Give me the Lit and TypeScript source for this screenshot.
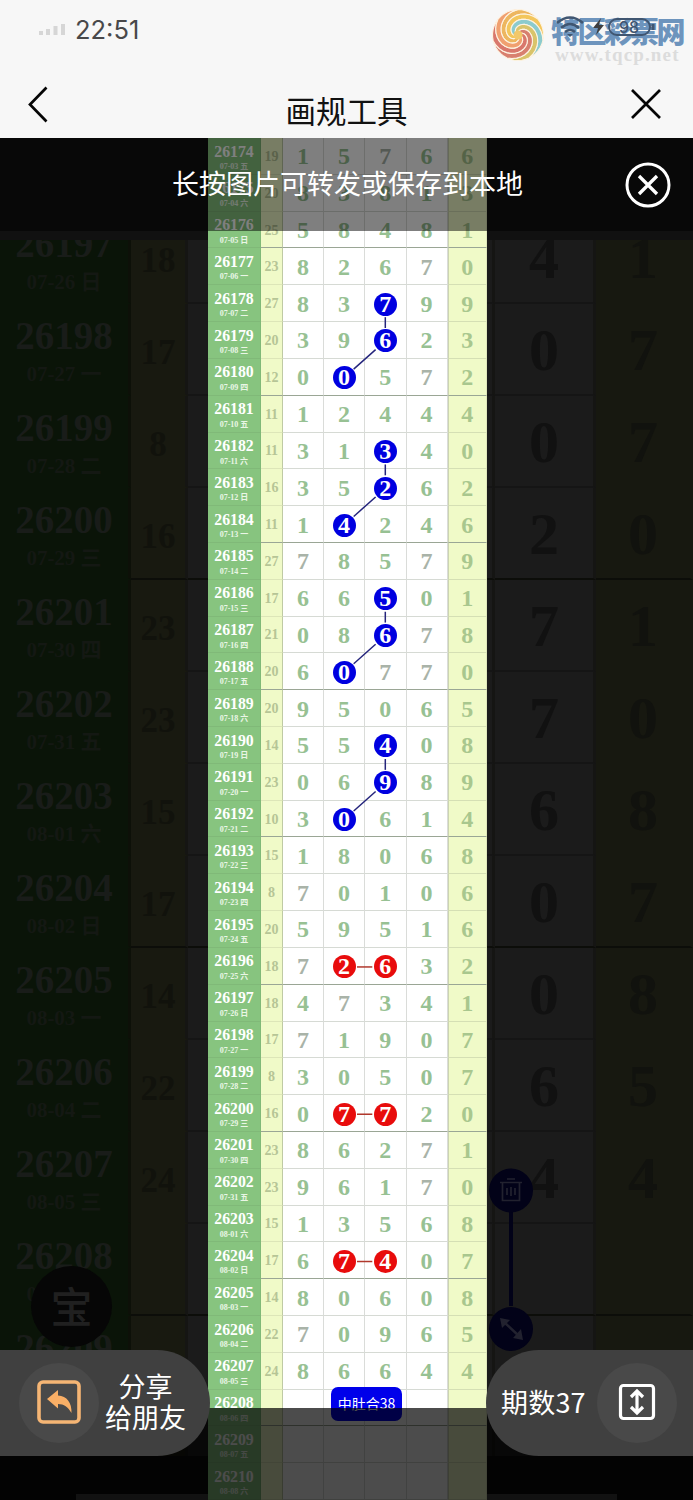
import { LitElement, html, css, svg } from "lit";
import { customElement } from "lit/decorators.js";
import { classMap } from "lit/directives/class-map.js";

const DRAWS = [
  "15766", "83813", "58481", "82670", "83799", "39623", "00572", "12444", "31340", "35262",
  "14246", "78579", "66501", "08678", "60770", "95065", "55408", "06989", "30614", "18068",
  "70106", "59516", "72632", "47341", "71907", "30507", "07720", "86271", "96170", "13568",
  "67407", "80608", "70965", "86644", "", "", "",
];
const FIRST = 26174;
const WEEK = "日一二三四五六";
const ROW = 36.82;

interface Row { issue: number; date: string; sum: string; digits: string[] }

const rows: Row[] = DRAWS.map((d, i) => {
  const day = new Date(Date.UTC(2026, 6, 3 + i));
  const pad = (n: number) => String(n).padStart(2, "0");
  const digits = d ? d.split("") : ["", "", "", "", ""];
  return {
    issue: FIRST + i,
    date: `${pad(day.getUTCMonth() + 1)}-${pad(day.getUTCDate())} ${WEEK[day.getUTCDay()]}`,
    sum: d ? String(digits.slice(0, 4).reduce((a, b) => a + Number(b), 0)) : "",
    digits,
  };
});

const BLUE = [[26178, 2], [26179, 2], [26180, 1], [26182, 2], [26183, 2], [26184, 1], [26186, 2], [26187, 2], [26188, 1], [26190, 2], [26191, 2], [26192, 1]];
const RED = [[26196, 1], [26196, 2], [26200, 1], [26200, 2], [26204, 1], [26204, 2]];
const has = (list: number[][], issue: number, col: number) => list.some(([a, b]) => a === issue && b === col);

// One arm of the swirl logo: the area between two spirals that wind into the centre.
const ARMS = ["#edb65f", "#f3c65c", "#8ccbcd", "#d9c46a", "#d8806f", "#d9786c", "#f0a070"];
const swirlArm = (k: number) => {
  const step = (Math.PI * 2) / ARMS.length;
  const pt = (t: number, a0: number) => {
    const a = a0 - (1 - t) * 3.9;
    const r = 25.5 * Math.pow(t, 0.9);
    return `${(27 + r * Math.cos(a)).toFixed(2)} ${(27 + r * Math.sin(a)).toFixed(2)}`;
  };
  const a = -Math.PI / 2 + k * step;
  const pts: string[] = [];
  for (let i = 0; i <= 20; i++) pts.push(pt(i / 20, a));
  for (let i = 1; i <= 6; i++) pts.push(pt(1, a + (step * i) / 6));
  for (let i = 19; i >= 0; i--) pts.push(pt(i / 20, a + step));
  return "M" + pts.join("L") + "Z";
};

@customElement("trend-chart")
class TrendChart extends LitElement {
  static styles = css`
    :host { display: block; position: relative; width: 279px; background: #fff; font-family: "Liberation Serif", "Noto Sans CJK SC", serif; font-weight: bold; }
    .row { display: grid; grid-template-columns: 53px 22px 41px 41px 41.5px 41px 39.5px; height: 36.82px; box-sizing: border-box; }
    .row > div { border-bottom: 1px solid #d6dad4; border-right: 1px solid #dadcd9; box-sizing: border-box; display: flex; align-items: center; justify-content: center; min-width: 0; padding-top: 2px; }
    .row > .issue { background: #87c47f; color: #fff; flex-direction: column; border-color: #80b978; justify-content: flex-start; padding-top: 5.5px; }
    .no { font-size: 15.8px; line-height: 15px; }
    .date { font-size: 8px; line-height: 9px; margin-top: 3.5px; color: #eaf6e6; }
    .row > .sum { background: #f0fac8; color: #b6c596; font-size: 14px; border-bottom-color: #dde6b8; border-right: 1px solid #bfcaa4; }
    .row > .num { color: #97c193; font-size: 24px; }
    .row > .grey { color: #a9b3a8; }
    .row > .last { background: #f0fac8; color: #a9c78e; border-bottom-color: #d5dfb4; border-left: 1px solid #ccd4b1; border-right-color: #dfe7bb; }
    .thick > div, .thick > .sum, .thick > .last { border-bottom-color: #9aa695; }
    .ball { width: 23px; height: 23px; border-radius: 50%; display: flex; align-items: center; justify-content: center; color: #fff; }
    .blue { background: #0000e0; }
    .red { background: #e80c0c; }
    .links { position: absolute; left: 0; top: 0; width: 279px; height: 1362px; }
    .tag { position: absolute; left: 123px; top: 1249px; width: 71px; height: 34px; border-radius: 7px; background: #0000ea; color: #fff; display: flex; align-items: center; justify-content: center; font: 14px "Noto Sans CJK SC", sans-serif; box-sizing: border-box; padding-bottom: 2px; }
  `;

  private link(issue: number, from: number, nextIssue: number, to: number) {
    const cx = [95, 136, 177.3];
    const cy = (n: number) => (n - FIRST + 0.5) * ROW + 0.5;
    const [x1, y1, x2, y2] = [cx[from], cy(issue), cx[to], cy(nextIssue)];
    const len = Math.hypot(x2 - x1, y2 - y1);
    const ux = ((x2 - x1) / len) * 13, uy = ((y2 - y1) / len) * 13;
    return svg`<line x1=${x1 + ux} y1=${y1 + uy} x2=${x2 - ux} y2=${y2 - uy} stroke=${issue === nextIssue ? "#b0382c" : "#25257c"} stroke-width="1.5"/>`;
  }

  render() {
    return html`
      ${rows.map(r => html`<div class=${classMap({ row: true, thick: r.issue % 4 === 0 })}>
        <div class="issue"><span class="no">${r.issue}</span><span class="date">${r.date}</span></div>
        <div class="sum">${r.sum}</div>
        ${r.digits.map((d, c) => {
          const blue = has(BLUE, r.issue, c), red = has(RED, r.issue, c);
          return html`<div class=${classMap({ num: true, last: c === 4, grey: d === "7" && c < 4 })}>${blue || red
            ? html`<span class=${classMap({ ball: true, blue, red })}>${d}</span>` : d}</div>`;
        })}
      </div>`)}
      <svg class="links">
        ${[26178, 26182, 26186, 26190].map(n => [this.link(n, 2, n + 1, 2), this.link(n + 1, 2, n + 2, 1)])}
        ${[26196, 26200, 26204].map(n => this.link(n, 1, n, 2))}
      </svg>
      <div class="tag">中肚合38</div>`;
  }
}

@customElement("dim-board")
class DimBoard extends LitElement {
  static styles = css`
    :host { display: block; height: 1362px; overflow: hidden; position: relative; isolation: isolate; background: #050505; font-family: "Liberation Serif", "Noto Sans CJK SC", serif; font-weight: bold; }
    .top { height: 102px; background: #111; position: relative; z-index: 1; }
    .board { margin-top: -28px; }
    .row { height: 92px; display: grid; grid-template-columns: 131px 57px 307px 101px 97px; }
    .row > div { display: flex; align-items: center; justify-content: center; box-sizing: border-box; border-bottom: 2px solid #151515; border-right: 3px solid #151513; font-size: 60px; color: #111; background: #1b1b1b; padding-top: 2px; }
    .row > .issue { background: #0a1408; border-right-color: #0d1008; border-bottom-color: #0a1408; flex-direction: column; color: #191c19; justify-content: flex-start; padding-top: 14px; }
    .no { font-size: 39px; line-height: 36px; }
    .date { font: bold 21px "Liberation Serif", "Noto Sans CJK SC", serif; line-height: 24px; margin-top: 8px; color: #141813; }
    .row > .sum { font-size: 35px; background: #181910; border-bottom-color: #181910; color: #11120c; padding-top: 7px; }
    .row > .last { background: #171810; color: #11120e; border-color: #171810; }
    .thick > div, .thick > .sum, .thick > .last { border-bottom-color: #0c0d09; }
    .foot { position: absolute; left: 0; right: 0; top: 1318px; height: 44px; background: #0a0a0a; }
    .home { position: absolute; left: 76px; top: 1356px; width: 541px; height: 6px; background: #3c3c3c; }
    .seal { position: absolute; left: 31px; top: 1128px; width: 81px; height: 81px; border-radius: 50%; background: #060606; color: #202020; display: flex; align-items: center; justify-content: center; font: 500 42px "Noto Sans CJK SC", sans-serif; box-sizing: border-box; padding-bottom: 4px; }
    .handle { position: absolute; left: 488px; top: 1028px; width: 47px; height: 186px; }
  `;
  render() {
    return html`
      <div class="top"></div>
      <div class="board">
        ${rows.filter(r => r.issue >= 26197).map(r => html`<div class=${classMap({ row: true, thick: r.issue % 4 === 0 })}>
          <div class="issue"><span class="no">${r.issue}</span><span class="date">${r.date}</span></div>
          <div class="sum">${r.sum}</div><div></div>
          <div>${r.digits[3]}</div><div class="last">${r.digits[4]}</div>
        </div>`)}
      </div>
      <div class="foot"></div><div class="home"></div>
      <div class="seal">宝</div>
      <svg class="handle" viewBox="0 0 47 186" fill="none" stroke="#22222f" stroke-width="1.7">
        <path d="M23 40V140" stroke="#020218" stroke-width="4"/>
        <circle cx="23" cy="24.500" r="22" fill="#020218" stroke="none"/>
        <circle cx="23" cy="163" r="22" fill="#020218" stroke="none"/>
        <path d="M12 16.500H34M19 13H27M14.500 17V34.500H31.500V17M19 22V29M23 21V30M27 22V29"/>
        <path d="M16 156L31 170" stroke-width="2.500"/>
        <path d="M12 152L22 154L14 162ZM35 174L33 163L25 172Z" fill="#22222f" stroke="none"/>
      </svg>`;
  }
}

@customElement("app-root")
class AppRoot extends LitElement {
  static styles = css`
    :host { display: flex; flex-direction: column; width: 693px; height: 1500px; overflow: hidden; background: #050505; font-family: "Noto Sans CJK SC", sans-serif; }
    .header { height: 138px; background: #f7f7f7; display: flex; flex-direction: column; flex: none; }
    .status { height: 70px; display: flex; align-items: flex-start; justify-content: space-between; box-sizing: border-box; padding: 8px 8px 0 38px; }
    .clock { display: flex; align-items: center; gap: 9px; color: #48484a; font: 25.5px "Inter", sans-serif; margin-top: 4px; height: 34px; }
    .brand { display: flex; gap: 6px; }
    .logo { width: 54px; height: 54px; }
    .words { position: relative; width: 134px; height: 56px; margin-top: 2px; }
    .site { font: 900 29px/42px "Noto Sans CJK SC", sans-serif; letter-spacing: -2.6px; color: #6d94bd; white-space: nowrap; transform: translateY(-1px); }
    .url { font: bold 19px/16px "Liberation Serif", serif; color: #dcdcdc; letter-spacing: 1.15px; padding-left: 4px; margin-top: -5px; }
    .sys { position: absolute; left: 3px; top: 4px; width: 104px; height: 25px; }
    .nav { height: 68px; display: grid; grid-template-columns: 90px 1fr 90px; align-items: center; }
    .title { text-align: center; font-size: 30.5px; line-height: 44px; color: #111; padding-top: 11px; }
    .icon-back { width: 24px; height: 40px; margin-left: 26px; }
    .icon-close { width: 34px; height: 34px; justify-self: end; margin-right: 30px; }
    .stage { position: relative; height: 1362px; display: grid; justify-items: center; }
    .stage > * { grid-area: 1 / 1; }
    .back { width: 693px; }
    .chart { margin-left: 2px; height: 1362px; }
    .banner { position: absolute; inset: 0 0 auto 0; height: 93px; background: rgba(0,0,0,.5); color: #fff; display: grid; grid-template-columns: 90px 1fr 90px; align-items: center; text-align: center; font-size: 27px; }
    .hint { white-space: nowrap; margin-left: 2px; transform: translateY(-2px); }
    .dismiss { width: 46px; height: 46px; margin-left: 22px; }
    .shade { position: absolute; left: 0; right: 0; top: 1270px; bottom: 0; background: rgba(0,0,0,.7); }
    .pill { position: absolute; top: 1212px; height: 106px; background: #404040; color: #fff; display: flex; align-items: center; box-sizing: border-box; }
    .share { left: 0; width: 210px; border-radius: 0 53px 53px 0; padding-left: 19px; gap: 6px; font-size: 27px; line-height: 31px; text-align: center; }
    .share .label { padding-bottom: 4px; }
    .count { left: 486px; width: 207px; border-radius: 53px 0 0 53px; padding-left: 15px; gap: 11px; font-size: 27px; letter-spacing: .2px; }
    .count .label { padding-bottom: 3px; }
    .disc { width: 80px; height: 80px; border-radius: 50%; background: #494949; display: flex; align-items: center; justify-content: center; flex: none; }
    .disc svg { width: 46px; height: 46px; margin-bottom: 3px; }
  `;
  render() {
    return html`
      <div class="header">
        <div class="status">
          <div class="clock">
            <svg width="28" height="14" viewBox="0 0 28 14" fill="#d6d6d6"><rect x="1" y="9" width="4" height="4"/><rect x="8" y="7" width="4" height="6"/><rect x="15.500" y="4" width="4" height="9"/><rect x="23" y="2" width="4" height="11"/></svg>
            <span>22:51</span>
          </div>
          <div class="brand">
            <svg class="logo" viewBox="0 0 54 54">
              ${ARMS.map((c, k) => svg`<path d=${swirlArm(k)} fill=${c} stroke="#fdf3e2" stroke-width="1.1"/>`)}
              <circle cx="27" cy="27" r="4.500" fill="#f2c86a"/>
            </svg>
            <div class="words">
              <div class="site">特区彩票网</div>
              <div class="url">www.tqcp.net</div>
              <svg class="sys" viewBox="0 0 104 25" fill="none" stroke="#405671">
                <path d="M3 9Q16-2 29 9M7 14Q16 6 25 14M11 18Q16 14 21 18" stroke-width="2.600"/>
                <path d="M13 20L16 23L19 20Z" fill="#405671" stroke="none"/>
                <path d="M47 4L39 14H44L42 21L50 11H45Z" fill="#3e3e40" stroke="none"/>
                <rect x="55" y="5" width="41" height="16" rx="8" stroke-width="2"/>
                <path d="M99 10V16" stroke-width="3"/>
                <text x="75" y="19" text-anchor="middle" font-family="Inter, sans-serif" font-size="16" font-weight="500" fill="#405671" stroke="none">98</text>
              </svg>
            </div>
          </div>
        </div>
        <div class="nav">
          <svg class="icon-back" viewBox="0 0 24 40" fill="none" stroke="#050505" stroke-width="2.700"><path d="M20.500 3.500L4 20.500L20.500 37.500"/></svg>
          <div class="title">画规工具</div>
          <svg class="icon-close" viewBox="0 0 34 34" fill="none" stroke="#050505" stroke-width="2.700"><path d="M3 3L31 31M31 3L3 31"/></svg>
        </div>
      </div>
      <div class="stage">
        <dim-board class="back"></dim-board>
        <trend-chart class="chart"></trend-chart>
        <div class="banner">
          <span></span><span class="hint">长按图片可转发或保存到本地</span>
          <svg class="dismiss" viewBox="0 0 46 46" fill="none" stroke="#fff"><circle cx="23" cy="23" r="21" stroke-width="3"/><path d="M14 14L32 32M32 14L14 32" stroke-width="3.300"/></svg>
        </div>
        <div class="shade"></div>
        <div class="pill share">
          <div class="disc"><svg viewBox="0 0 46 46"><rect x="3" y="3" width="40" height="40" rx="4" fill="none" stroke="#f5b574" stroke-width="3.600"/><path d="M11 20L22 11V16.500C31 17 36 24 35.500 34C32 28 28 25 22 25V29.500Z" fill="#f9af66"/></svg></div>
          <div class="label">分享<br>给朋友</div>
        </div>
        <div class="pill count">
          <span class="label">期数37</span>
          <div class="disc"><svg viewBox="0 0 46 46" fill="none" stroke="#fff" stroke-width="3.200"><rect x="6.500" y="6.500" width="33" height="33" rx="3"/><path d="M23 13V33M17 18L23 12L29 18M17 28L23 34L29 28"/></svg></div>
        </div>
      </div>`;
  }
}
